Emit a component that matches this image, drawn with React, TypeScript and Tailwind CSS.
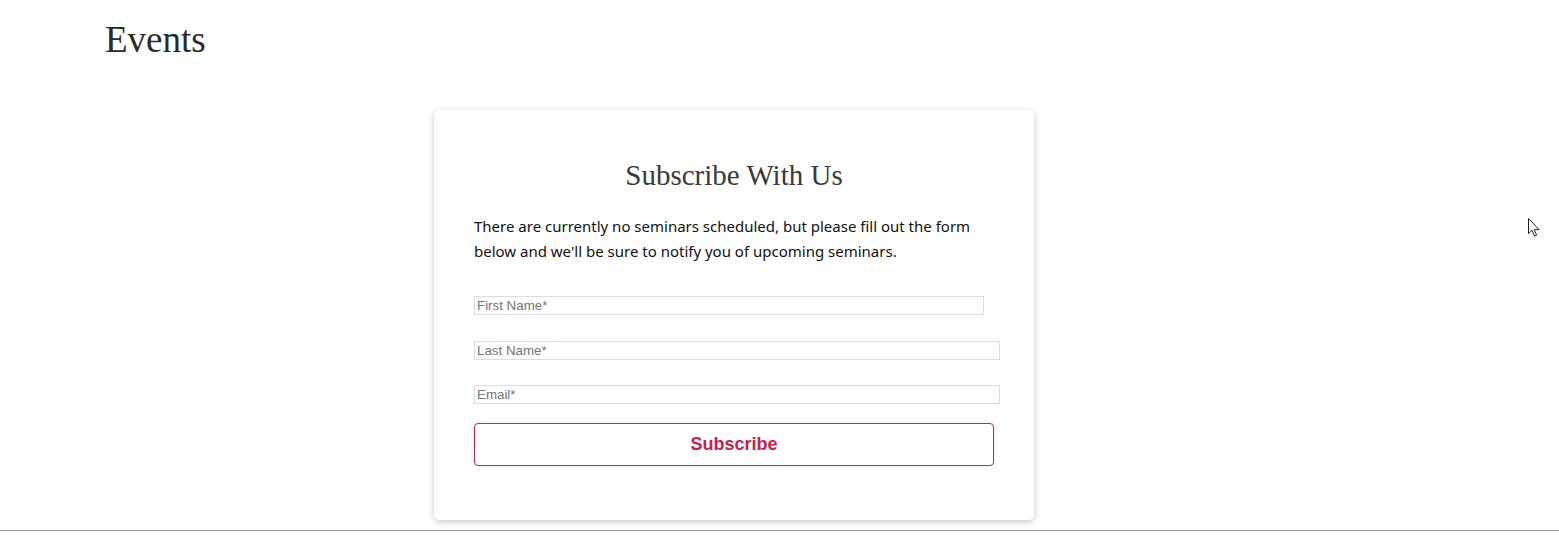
export default function App() {
  return (
    <div className="relative min-h-[539px] bg-white">
      <h1
        className="ml-[105px] pt-[21px] text-[37px] leading-none font-light text-[#2a2a2a]"
        style={{ fontFamily: '"Liberation Serif", serif' }}
      >
        Events
      </h1>

      <div className="ml-[434px] mt-[52px] w-[600px] h-[410px] rounded-[5px] bg-white shadow-[0_2px_7px_rgba(0,0,0,0.22)] px-[40px] pt-[51px]">
        <h2
          className="text-center text-[29px] leading-none text-[#3a3a3a]"
          style={{ fontFamily: '"Liberation Serif", serif' }}
        >
          Subscribe With Us
        </h2>
        <p
          className="mt-[24px] text-[15px] leading-[25px] text-[#111]"
          style={{ fontFamily: '"Noto Sans", sans-serif' }}
        >
          There are currently no seminars scheduled, but please fill out the form below and we'll be sure to notify you of upcoming seminars.
        </p>

        <form className="mt-[32px] flex flex-col" style={{ fontFamily: '"Liberation Sans", Arial, sans-serif' }}>
          <input
            type="text"
            placeholder="First Name*"
            className="w-[510px] h-[19px] border border-[#ddd] px-[2px] text-[13.33px] leading-none placeholder:text-[#757575] outline-none"
          />
          <input
            type="text"
            placeholder="Last Name*"
            className="mt-[26px] w-[526px] h-[19px] border border-[#ddd] px-[2px] text-[13.33px] leading-none placeholder:text-[#757575] outline-none"
          />
          <input
            type="email"
            placeholder="Email*"
            className="mt-[25px] w-[526px] h-[19px] border border-[#ddd] px-[2px] text-[13.33px] leading-none placeholder:text-[#757575] outline-none"
          />
          <button
            type="button"
            className="mt-[19px] w-[520px] h-[43px] rounded-[4px] border border-[#d81f4f] bg-white text-[18px] font-bold text-[#c8204f] shadow-[0_0_6px_rgba(0,0,0,0.08)]"
          >
            Subscribe
          </button>
        </form>
      </div>

      <div className="mt-[10px] border-t border-[#999]" />

      <svg
        className="absolute left-[1528px] top-[218px]"
        width="13"
        height="20"
        viewBox="0 0 13 20"
      >
        <path
          d="M0.5 0.5 L0.5 15.5 L4 12.3 L6.5 18 L8.6 17.1 L6.2 11.6 L11 11.6 Z"
          fill="white"
          stroke="#222"
          strokeWidth="1"
          strokeLinejoin="round"
        />
      </svg>
    </div>
  );
}
